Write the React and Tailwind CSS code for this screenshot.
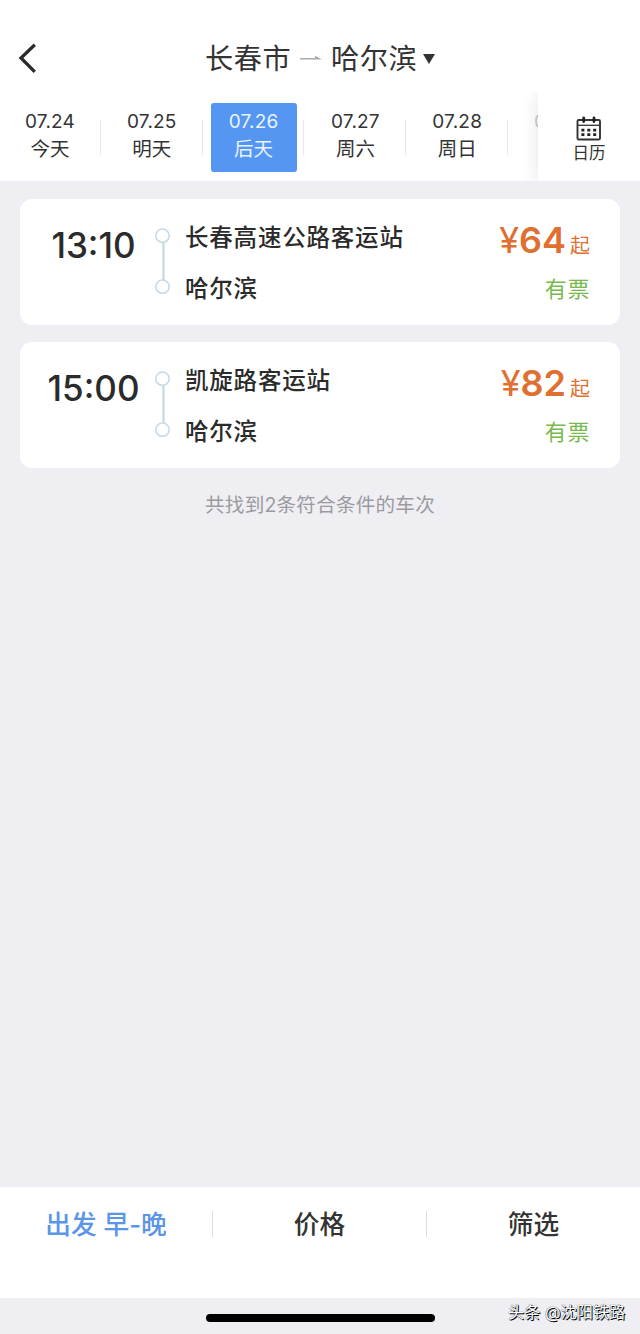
const days = [
  { date: "07.24", label: "今天" },
  { date: "07.25", label: "明天" },
  { date: "07.26", label: "后天", active: true },
  { date: "07.27", label: "周六" },
  { date: "07.28", label: "周日" },
];

const trips = [
  { time: "13:10", from: "长春高速公路客运站", to: "哈尔滨", price: "64" },
  { time: "15:00", from: "凯旋路客运站", to: "哈尔滨", price: "82" },
];

function BackIcon() {
  return (
    <svg width="22" height="32" viewBox="0 0 22 32" fill="none">
      <path d="M18.8 2.8 5 16 18.8 29.8" stroke="#2b2b2b" strokeWidth="3.3" />
    </svg>
  );
}

function CalendarIcon() {
  return (
    <svg width="26" height="26" viewBox="0 0 26 26" fill="none">
      <rect x="1.5" y="4" width="22.5" height="19.5" rx="1.2" stroke="#333" strokeWidth="1.9" />
      <path d="M1.3 9.3h23" stroke="#333" strokeWidth="1.3" />
      <path d="M7.7 2v3.6M18 2v3.6" stroke="#222" strokeWidth="2.8" strokeLinecap="round" />
      <path
        d="M5.4 14.1h3M11.3 14.1h3M17.2 14.1h3M5.4 18.7h3M11.3 18.7h3M17.2 18.7h3"
        stroke="#222"
        strokeWidth="2.8"
      />
    </svg>
  );
}

function RouteLine() {
  return (
    <svg width="16" height="68" viewBox="0 0 16 68" fill="none">
      <path d="M8.5 15v37" stroke="#c8dbe9" strokeWidth="2.4" />
      <circle cx="7.5" cy="7.7" r="6.7" fill="#fff" stroke="#c9dae7" strokeWidth="1.6" />
      <circle cx="7.5" cy="58.7" r="6.7" fill="#fff" stroke="#c9dae7" strokeWidth="1.6" />
    </svg>
  );
}

function Header() {
  return (
    <header className="flex h-[92px] shrink-0 items-start px-4 pt-[42px] text-[#333]">
      <div className="w-[189px]">
        <BackIcon />
      </div>
      <div className="flex h-8 items-center pt-px whitespace-nowrap text-[28.2px] leading-8 tracking-[0.5px]">
        <span>长春市</span>
        <svg className="mr-[9px] ml-[9px]" width="22" height="8" viewBox="0 0 22 8">
          <path d="M0 3h15V.8L22 4.6H0z" fill="#aaa" />
        </svg>
        <span>哈尔滨</span>
        <svg className="ml-1.5" width="12" height="10" viewBox="0 0 12 10">
          <path d="M0 0h12L6 10z" fill="#333" />
        </svg>
      </div>
    </header>
  );
}

function DateTabs() {
  return (
    <div className="flex h-[89px] shrink-0 overflow-hidden">
      <div className="-ml-px flex w-[539px] shrink-0 overflow-hidden">
        {days.map((day) => (
          <div key={day.date} className="flex w-[101.8px] shrink-0 pt-[11px]">
            <div
              className={`ml-2 flex h-[69px] w-[86px] flex-col items-center rounded-[3px] pt-[5px] ${
                day.active ? "bg-[#5596f2] text-[#e8f4ff]" : "text-[#333]"
              }`}
            >
              <span className="text-[19px] leading-7 tracking-[0.2px]">{day.date}</span>
              <span className="text-[19.5px] leading-[27px]">{day.label}</span>
            </div>
            <div className="mt-[17px] ml-auto h-[35px] w-px bg-[#e8e8e8]" />
          </div>
        ))}
        {/* next day peeks out from under the calendar button */}
        <div className="pt-4 pl-[26px] text-[19px] leading-7 text-[#ccc]">0</div>
      </div>
      <div className="relative flex grow flex-col items-center bg-white pt-6 text-[#333] shadow-[-2px_2px_16px_rgba(0,0,0,0.09)]">
        <CalendarIcon />
        <span className="text-[16.5px] leading-[22px]">日历</span>
      </div>
    </div>
  );
}

function TripCard({ trip }) {
  return (
    <article className="flex h-[126px] rounded-[12px] bg-white pr-[30px] text-[#2b2b2b]">
      <div className="mt-[26px] w-[147px] shrink-0 text-center text-[35px] leading-10 font-medium">
        {trip.time}
      </div>
      <div className="-ml-[12px] mt-[29px]">
        <RouteLine />
      </div>
      <div className="mt-[23px] ml-[14px] flex flex-col gap-[18.5px] text-[23.5px] leading-8 font-medium tracking-[0.8px]">
        <span>{trip.from}</span>
        <span>{trip.to}</span>
      </div>
      <div className="ml-auto flex flex-col items-end">
        <div className="mt-[21px] flex h-10 items-baseline leading-10 text-[#df7031]">
          <span className="text-[36px]">¥</span>
          <span className="text-[36px] font-semibold">{trip.price}</span>
          <span className="ml-1 text-[20px]">起</span>
        </div>
        <span className="mt-[13px] text-[22px] leading-8 tracking-[0.6px] text-[#77b94d]">有票</span>
      </div>
    </article>
  );
}

function FilterBar() {
  return (
    <nav className="flex h-[111px] shrink-0 items-start bg-white pt-5 text-center text-[25.7px] leading-9 font-medium text-[#333]">
      <div className="w-[212px] text-[#5b96e6]">出发 早-晚</div>
      <div className="mt-1 h-[26px] w-px bg-[#ddd]" />
      <div className="w-[213px]">价格</div>
      <div className="mt-1 h-[26px] w-px bg-[#ddd]" />
      <div className="w-[213px]">筛选</div>
    </nav>
  );
}

export default function App() {
  return (
    <div className="flex h-[1334px] w-[640px] flex-col overflow-hidden bg-[#eeeef3] font-['Inter','Noto_Sans_CJK_SC',sans-serif]">
      <div className="shrink-0 bg-white">
        <Header />
        <DateTabs />
      </div>

      {/* Results */}
      <main className="flex grow flex-col gap-[17px] px-5 pt-[18px]">
        {trips.map((trip) => (
          <TripCard key={trip.time} trip={trip} />
        ))}
        <p className="mt-1 text-center text-[19.6px] leading-8 tracking-[0.2px] text-[#9b9b9f]">
          共找到2条符合条件的车次
        </p>
      </main>

      <FilterBar />

      {/* Home indicator and source mark */}
      <footer className="flex h-9 shrink-0 items-start">
        <div className="mt-4 ml-[206px] h-2 w-[229px] rounded-full bg-black" />
        <div className="mt-0.5 ml-[73px] whitespace-nowrap text-[16.2px] leading-6 text-white [text-shadow:1px_1px_0_#000,0_0_1px_#000]">
          头条 @沈阳铁路
        </div>
      </footer>
    </div>
  );
}
